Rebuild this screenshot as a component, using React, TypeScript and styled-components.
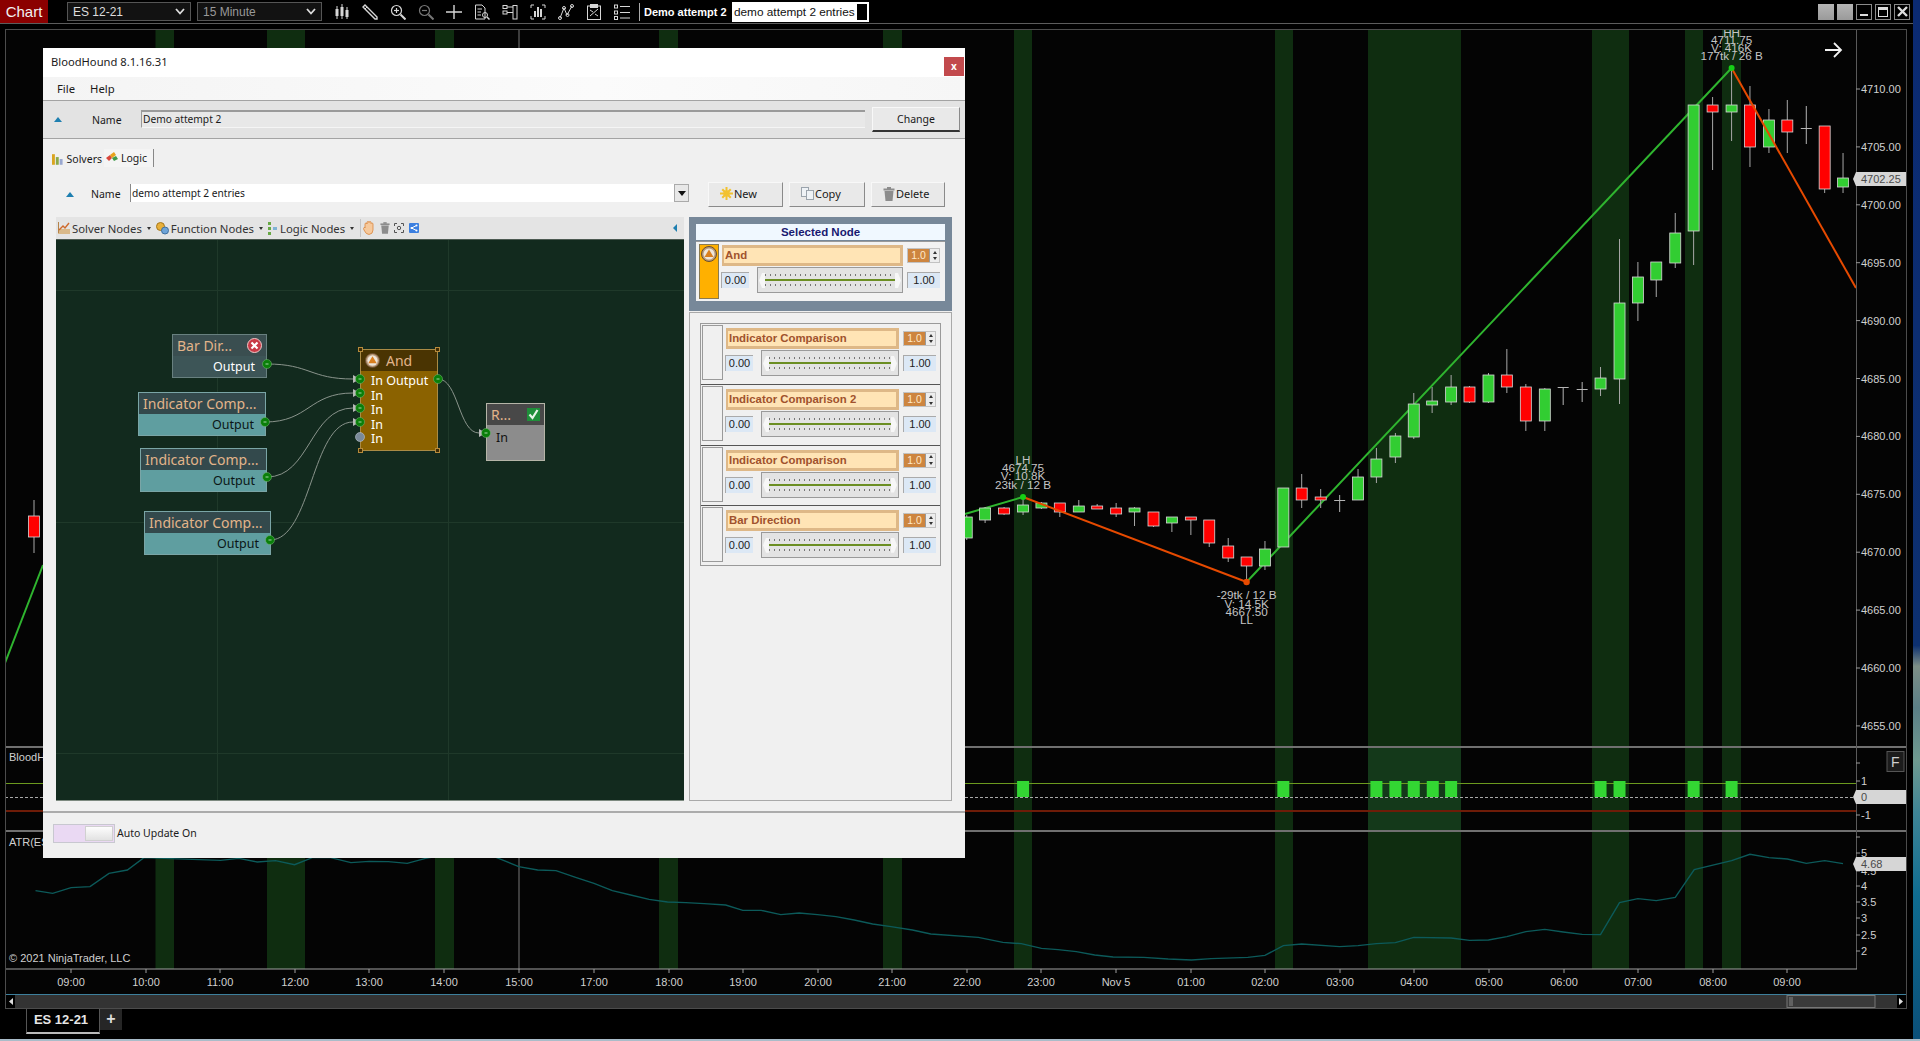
import React from "react"
import styled, { createGlobalStyle } from "styled-components"

const GlobalStyle = createGlobalStyle`
html, body {
    margin: 0;
    padding: 0;
    background: #000;
    overflow: hidden;
}
* {
    box-sizing: border-box;
}
`

const UI_FONT = `"Noto Sans", "Liberation Sans", sans-serif`
const CHART_FONT = `"Liberation Sans", Arial, sans-serif`

const Desktop = styled.div`
position: relative;
width: 1920px;
height: 1041px;
overflow: hidden;
background: linear-gradient(180deg, #0b2a72 0%, #0d3070 62%, #7d8f86 64%, #5b7f86 68%, #6f9a90 73%, #3f8596 78%, #0f6c90 86%, #0b4f78 100%);
`

const Platform = styled.div`
width: 1913px;
height: 1039px;
background: #000;
display: flex;
flex-direction: column;
font-family: ${CHART_FONT};
`

const BottomEdge = styled.div`
height: 2px;
background: #a9bcc9;
`

const TopBar = styled.div`
height: 24px;
flex: none;
display: flex;
align-items: center;
border-bottom: 1px solid #5c5c5c;
`

const ChartTag = styled.div`
width: 48px;
height: 23px;
background: #8b0000;
color: #f2f2f2;
font-size: 15px;
display: flex;
align-items: center;
justify-content: center;
`

const Select = styled.div<{ $dim?: boolean }>`
width: ${p => (p.$dim ? 125 : 124)}px;
height: 19px;
margin-left: ${p => (p.$dim ? 6 : 19)}px;
border: 1px solid #555;
background: #121212;
color: ${p => (p.$dim ? "#999" : "#ddd")};
font-size: 12px;
padding: 0 5px;
display: flex;
align-items: center;
justify-content: space-between;
`

const ToolIcons = styled.div`
display: flex;
gap: 12px;
margin-left: 12px;
color: #d6d6d6;
`

const ToolSep = styled.div`
width: 1px;
height: 18px;
background: #aaa;
margin-left: 9px;
`

const WorkspaceName = styled.div`
color: #fff;
font-weight: bold;
font-size: 11px;
margin-left: 4px;
width: 88px;
white-space: nowrap;
`

const WorkspaceInput = styled.div`
width: 137px;
height: 20px;
background: #fff;
color: #111;
font-size: 11.8px;
padding-left: 2px;
display: flex;
align-items: center;
justify-content: space-between;
white-space: nowrap;
&::after {
    content: "";
    width: 10px;
    height: 16px;
    background: #000;
    margin-right: 2px;
}
`

const WindowButtons = styled.div`
margin-left: auto;
display: flex;
gap: 3px;
padding-right: 3px;
`

const GreyButton = styled.div`
width: 16px;
height: 16px;
background: linear-gradient(180deg, #b5b5b5, #9a9a9a);
`

const WinButton = styled.div`
width: 16px;
height: 16px;
border: 1px solid #8a8a8a;
display: flex;
align-items: center;
justify-content: center;
color: #ddd;
`

const ChartFrame = styled.div`
margin: 5px 0 0 5px;
width: 1902px;
height: 980px;
flex: none;
`

const ChartSvg = styled.svg`
display: block;
font-family: ${CHART_FONT};
`

const AxisText = styled.text`
fill: #d0d0d0;
font-size: 11px;
`

const PivotText = styled.text`
fill: #c4c4c4;
font-size: 11.7px;
text-anchor: middle;
`

const TabStrip = styled.div`
flex: 1;
display: flex;
padding-left: 26px;
`

const ChartTab = styled.div`
width: 74px;
height: 25px;
border: 1px solid #555;
border-top: none;
border-bottom: 2px solid #bbb;
color: #e6e6e6;
font-weight: bold;
font-size: 13px;
padding: 0 4px 3px 0;
display: flex;
align-items: center;
justify-content: center;
`

const AddTab = styled.div`
width: 22px;
height: 21px;
background: #262626;
color: #ddd;
font-weight: bold;
font-size: 16px;
padding-bottom: 2px;
display: flex;
align-items: center;
justify-content: center;
`

/* the floating BloodHound window */
const Dialog = styled.div`
position: absolute;
left: 43px;
top: 48px;
width: 922px;
height: 810px;
background: #f0f0f0;
display: flex;
flex-direction: column;
font-family: ${UI_FONT};
color: #1a1a1a;
font-size: 11px;
`

const TitleBar = styled.div`
height: 29px;
flex: none;
background: #fff;
display: flex;
align-items: center;
justify-content: space-between;
padding: 0 1px 2px 8px;
font-size: 11.2px;
`

const CloseButton = styled.div`
width: 20px;
height: 19px;
margin-top: 9px;
background: #c24a4d;
color: #fff;
font-size: 10px;
font-weight: bold;
display: flex;
align-items: center;
justify-content: center;
`

const MenuBar = styled.div`
height: 23px;
flex: none;
background: linear-gradient(90deg, #f4f4f4, #fbfbfb 60%, #f6f6f6);
display: flex;
align-items: center;
gap: 15px;
padding-left: 14px;
font-size: 11.3px;
`

const NameBar = styled.div`
height: 39px;
flex: none;
background: #e3e3e3;
border-top: 1px solid #a3a3a3;
border-bottom: 1px solid #a3a3a3;
display: flex;
align-items: center;
padding-left: 11px;
font-size: 10.5px;
`

const UpTriangle = styled.div`
width: 0;
height: 0;
border-left: 4px solid transparent;
border-right: 4px solid transparent;
border-bottom: 5px solid #1e7fb0;
flex: none;
`

const BarLabel = styled.span`
margin-left: 30px;
width: 49px;
`

const NameField = styled.div`
width: 724px;
height: 18px;
margin-top: -1px;
background: #e8e8e8;
border-top: 2px solid #9a9a9a;
border-left: 1px solid #9a9a9a;
border-bottom: 1px solid #f5f5f5;
padding-left: 1px;
font-size: 10.2px;
line-height: 14px;
white-space: nowrap;
`

const RaisedButton = styled.div<{ $w: number }>`
width: ${p => p.$w}px;
height: 25px;
flex: none;
background: #e9e9e9;
border: 1px solid #f8f8f8;
border-right-color: #8a8a8a;
border-bottom-color: #8a8a8a;
display: flex;
align-items: center;
gap: 1px;
padding: 0 0 2px 11px;
font-size: 11px;
`

const ChangeButton = styled(RaisedButton)`
margin-left: 7px;
border-bottom: 2px solid #333;
justify-content: center;
padding: 0;
font-size: 10.5px;
`

const TabRow = styled.div`
height: 18px;
flex: none;
margin-top: 10px;
padding-left: 7px;
display: flex;
align-items: flex-end;
gap: 2px;
font-size: 10.5px;
`

const Tab = styled.div<{ $active?: boolean }>`
width: ${p => (p.$active ? 50 : 52)}px;
height: ${p => (p.$active ? 18 : 16)}px;
display: flex;
align-items: center;
gap: 3px;
padding-left: 2px;
background: ${p => (p.$active ? "#f4f4f4" : "#f0f0f0")};
border-right: ${p => (p.$active ? "1px solid #888" : "none")};
`

const Content = styled.div`
flex: 1;
padding: 15px 13px 10px;
display: flex;
flex-direction: column;
gap: 10px;
min-height: 0;
`

const LogicNameRow = styled.div`
height: 25px;
flex: none;
display: flex;
`

const RowTriangle = styled(UpTriangle)`
margin: 10px 17px 0 10px;
`

const RowLabel = styled.span`
width: 39px;
font-size: 10.5px;
line-height: 24px;
`

const Combo = styled.div`
width: 559px;
height: 18px;
margin: 2px 19px 0 0;
background: #fff;
border-left: 1px solid #888;
display: flex;
align-items: center;
justify-content: space-between;
padding-left: 1px;
font-size: 10.2px;
`

const ComboArrow = styled.div`
width: 15px;
height: 18px;
background: #e8e8e8;
border: 1px solid #aaa;
display: flex;
align-items: center;
justify-content: center;
&::after {
    content: "";
    border-left: 4px solid transparent;
    border-right: 4px solid transparent;
    border-top: 5px solid #111;
}
`

const ButtonGroup = styled.div`
display: flex;
gap: 6px;
`

const BodyGrid = styled.div`
flex: 1;
display: grid;
grid-template-columns: 628px 263px;
gap: 5px;
min-height: 0;
`

const GraphColumn = styled.div`
display: flex;
flex-direction: column;
`

const GraphToolbar = styled.div`
height: 22px;
flex: none;
background: #e4e4e4;
display: flex;
align-items: center;
padding: 0 7px 0 2px;
font-size: 11.3px;
color: #333;
`

const ToolItem = styled.span`
display: flex;
align-items: center;
gap: 2px;
white-space: nowrap;
`

const DropDot = styled.span`
margin: 0 5px 0 5px;
border-left: 2px solid transparent;
border-right: 2px solid transparent;
border-top: 3px solid #333;
`

const VertBar = styled.span`
width: 1px;
height: 18px;
background: #c4c4c4;
margin: 0 2px 0 1px;
`

const GroupGap = styled.span`
display: flex;
align-items: center;
gap: 4.5px;
`

const CollapseArrow = styled.span`
margin-left: auto;
border-top: 4px solid transparent;
border-bottom: 4px solid transparent;
border-right: 4px solid #1e7fb0;
`

const Canvas = styled.div`
position: relative;
flex: 1;
overflow: hidden;
border-top: 1px solid #4c5a52;
border-bottom: 1px solid #7d8a80;
background:
  linear-gradient(#1f392a, #1f392a) 161px 0 / 1px 100% no-repeat,
  linear-gradient(#1f392a, #1f392a) 392px 0 / 1px 100% no-repeat,
  linear-gradient(#1f392a, #1f392a) 0 50px / 100% 1px no-repeat,
  linear-gradient(#1f392a, #1f392a) 0 282px / 100% 1px no-repeat,
  linear-gradient(#1f392a, #1f392a) 0 513px / 100% 1px no-repeat,
  #122a1e;
`

const Wires = styled.svg`
position: absolute;
left: 0;
top: 0;
pointer-events: none;
`

type NodeKind = "bar" | "indicator" | "logic" | "result"

const NODE_COLORS: Record<NodeKind, { head: string; body: string; border: string; text: string }> = {
    bar: { head: "#3a4e50", body: "#3d5557", border: "#68807f", text: "#fff" },
    indicator: { head: "#33494c", body: "#5f9ea0", border: "#7aa5a6", text: "#0b1616" },
    logic: { head: "#4a3402", body: "#8b6200", border: "#a98a45", text: "#fff" },
    result: { head: "#484848", body: "#8c8c8c", border: "#b5b5a8", text: "#111" },
}

const GraphNode = styled.div<{ $x: number; $y: number; $w: number; $h: number; $kind: NodeKind }>`
position: absolute;
left: ${p => p.$x - 56}px;
top: ${p => p.$y - 240}px;
width: ${p => p.$w}px;
height: ${p => p.$h}px;
background: ${p => NODE_COLORS[p.$kind].body};
border: 1px solid ${p => NODE_COLORS[p.$kind].border};
color: ${p => NODE_COLORS[p.$kind].text};
display: flex;
flex-direction: column;
`

const NodeHead = styled.div<{ $kind: NodeKind }>`
height: 21px;
flex: none;
background: ${p => NODE_COLORS[p.$kind].head};
color: #e2b48a;
font-size: 14px;
line-height: 21px;
padding-left: 4px;
display: flex;
align-items: center;
justify-content: space-between;
padding-right: 4px;
white-space: nowrap;
`

const LogicHead = styled(NodeHead)`
justify-content: flex-start;
gap: 6px;
`

const NodeOutput = styled.div`
text-align: right;
font-size: 12.5px;
line-height: 22px;
padding-right: 11px;
`

const LogicBody = styled.div`
padding: 3px 0 0 10px;
font-size: 12.5px;
line-height: 14.5px;
`

const ResultBody = styled.div`
padding: 4px 0 0 9px;
font-size: 12.5px;
`

const Handle = styled.span<{ $r?: boolean; $b?: boolean }>`
position: absolute;
width: 5px;
height: 5px;
border: 1px solid #b58a3c;
background: #3c2b05;
${p => (p.$r ? "right: -3px;" : "left: -3px;")}
${p => (p.$b ? "bottom: -3px;" : "top: -3px;")}
`

const SidePanel = styled.div`
display: flex;
flex-direction: column;
gap: 1px;
min-height: 0;
`

const SelectedBox = styled.div`
height: 94px;
flex: none;
background: #778899;
padding: 7px 7px 0;
`

const SelectedHead = styled.div`
height: 16px;
background: #f0f8ff;
color: #191970;
font-family: ${CHART_FONT};
font-weight: bold;
font-size: 11.5px;
line-height: 16px;
text-align: center;
`

const SelectedBody = styled.div`
height: 60px;
margin-top: 1px;
background: #f2f2f2;
border-top: 1px solid #999;
padding: 2px 0 0 3px;
`

const ListPanel = styled.div`
flex: 1;
background: #f0f0f0;
border: 1px solid #a9a9a9;
padding: 10px;
`

const NodeList = styled.div`
height: 243px;
border: 1px solid #9a9a9a;
display: grid;
grid-auto-rows: 1fr;
`

const NodeCard = styled.div<{ $selected?: boolean }>`
display: flex;
padding: ${p => (p.$selected ? "0" : "1px 0 0 1px")};
& + & {
    border-top: 1px solid #555;
}
`

const Swatch = styled.div<{ $selected?: boolean }>`
width: ${p => (p.$selected ? 20 : 21)}px;
height: 55px;
flex: none;
background: ${p => (p.$selected ? "#ffb000" : "#f0f0f0")};
border: 1px solid ${p => (p.$selected ? "#8a7a50" : "#9a9a9a")};
display: flex;
justify-content: center;
padding-top: 1px;
`

const Controls = styled.div<{ $selected?: boolean }>`
margin: ${p => (p.$selected ? "1px 0 0 2px" : "3px 0 0 2px")};
display: grid;
grid-template-columns: 28px ${p => (p.$selected ? 150 : 142)}px 33px;
grid-template-rows: 21px 26px;
column-gap: 4px;
row-gap: 1px;
align-items: center;
`

const NodeTitle = styled.div`
grid-column: 1 / 3;
height: 21px;
margin-left: 1px;
background: #ffe4b5;
border: 3px solid #deb887;
border-left-width: 2px;
color: #a0522d;
font-family: ${CHART_FONT};
font-weight: bold;
font-size: 11.4px;
line-height: 15px;
padding-left: 1px;
white-space: nowrap;
`

const Spinner = styled.div`
height: 15px;
display: flex;
border: 1px solid #c2c2c2;
`

const SpinValue = styled.div`
width: 21px;
background: #cd853f;
color: #ffe8c8;
font-family: ${CHART_FONT};
font-size: 10.5px;
line-height: 13px;
text-align: center;
`

const SpinArrows = styled.div`
flex: 1;
background: #ededed;
display: flex;
flex-direction: column;
align-items: center;
justify-content: space-around;
border-left: 1px solid #999;
`

const SpinUp = styled.span`
border-left: 2px solid transparent;
border-right: 2px solid transparent;
border-bottom: 3px solid #333;
`

const SpinDown = styled.span`
border-left: 2px solid transparent;
border-right: 2px solid transparent;
border-top: 3px solid #333;
`

const ValueBox = styled.div`
height: 16px;
background: #dce8f5;
border-top: 1px solid #aaa;
border-left: 1px solid #aaa;
font-family: ${CHART_FONT};
font-size: 11px;
line-height: 15px;
text-align: center;
color: #222;
`

const Slider = styled.div`
position: relative;
height: 26px;
margin-left: 4px;
width: calc(100% - 4px);
background: #e3e3e3;
border: 1px solid #9a9a9a;
&::before,
&::after {
    content: "";
    position: absolute;
    left: 7px;
    right: 7px;
    height: 2px;
    background: repeating-linear-gradient(90deg, #777 0 1px, transparent 1px 5px);
}
&::before {
    top: 6px;
}
&::after {
    top: 16px;
}
`

const SliderFill = styled.div`
position: absolute;
left: 6px;
right: 5px;
top: 11px;
height: 2px;
background: #6b8e23;
`

const SliderStop = styled.span`
position: absolute;
left: 6px;
top: 7px;
width: 1px;
height: 11px;
background: #666;
`

const ThumbLeft = styled.span`
position: absolute;
left: 1px;
top: 5px;
width: 6px;
height: 15px;
background: #f7f7f7;
clip-path: polygon(100% 0, 100% 100%, 50% 100%, 0 50%, 50% 0);
`

const ThumbRight = styled.span`
position: absolute;
right: 1px;
top: 5px;
width: 6px;
height: 15px;
background: #f7f7f7;
clip-path: polygon(0 0, 50% 0, 100% 50%, 50% 100%, 0 100%);
`

const Footer = styled.div`
height: 47px;
flex: none;
border-top: 2px solid #ababab;
padding: 11px 0 0 10px;
display: flex;
align-items: flex-start;
gap: 2px;
font-size: 10.5px;
`

const Toggle = styled.div`
width: 62px;
height: 19px;
background: #ead9f3;
border: 1px solid #c8c8d0;
display: flex;
justify-content: flex-end;
padding: 1px;
`

const ToggleKnob = styled.div`
width: 28px;
background: linear-gradient(180deg, #fdfdfd, #e2e2e2);
border: 1px solid #d0d0d0;
`

const ToggleLabel = styled.span`
line-height: 19px;
`

/* ---------- drawn icons ---------- */

function IconCandles() {
    return (
        <svg width="16" height="16" viewBox="0 0 16 16" stroke="currentColor" fill="currentColor">
            <path d="M3 2v13M8 0v15M13 3v12" strokeWidth="1" />
            <rect x="1.5" y="5" width="3" height="7" stroke="none" />
            <rect x="6.5" y="3" width="3" height="9" stroke="none" />
            <rect x="11.5" y="6" width="3" height="7" stroke="none" />
        </svg>
    )
}

function IconPencil() {
    return (
        <svg width="16" height="16" viewBox="0 0 16 16" fill="none" stroke="currentColor">
            <path d="M1 3L3 1L15 13L15 15L13 15Z" strokeWidth="1.4" />
            <path d="M3 5L5 3" />
        </svg>
    )
}

function IconZoom({ plus, dim }: { plus?: boolean; dim?: boolean }) {
    return (
        <svg width="16" height="16" viewBox="0 0 16 16" fill="none" stroke={dim ? "#777" : "currentColor"} strokeWidth="1.2">
            <circle cx="6.5" cy="6.5" r="5" />
            <path d="M10.5 10.5L15.5 15.5" strokeWidth="2" />
            <path d="M4 6.5H9" />
            {plus && <path d="M6.5 4V9" />}
        </svg>
    )
}

function IconCross() {
    return (
        <svg width="16" height="16" viewBox="0 0 16 16" stroke="currentColor" strokeWidth="1.4">
            <path d="M0 8H16M8 1V15" />
        </svg>
    )
}

function IconDocSearch() {
    return (
        <svg width="16" height="16" viewBox="0 0 16 16" fill="none" stroke="currentColor">
            <path d="M1.5 1H8L11 4V15H1.5Z" />
            <path d="M3.5 5H8M3.5 8H7M3.5 11H7" />
            <circle cx="11" cy="11" r="2.5" />
            <path d="M13 13L15.5 15.5" strokeWidth="1.5" />
        </svg>
    )
}

function IconPanels() {
    return (
        <svg width="16" height="16" viewBox="0 0 16 16" fill="none" stroke="currentColor">
            <rect x="11" y="1.5" width="4" height="13.5" />
            <rect x="1" y="1.5" width="4" height="3" />
            <rect x="1" y="7" width="4" height="3" />
            <path d="M5 3H11M5 8.5H11" />
        </svg>
    )
}

function IconBarsFrame() {
    return (
        <svg width="16" height="16" viewBox="0 0 16 16" fill="none" stroke="currentColor">
            <path d="M1 4V1H4M12 1H15V4M15 12V15H12M4 15H1V12" />
            <path d="M5 13V7M8 13V3M11 13V5" strokeWidth="2" />
        </svg>
    )
}

function IconLineNodes() {
    return (
        <svg width="16" height="16" viewBox="0 0 16 16" fill="none" stroke="currentColor">
            <path d="M2 14L6 4L9 11L14 2" />
            <circle cx="2" cy="14" r="1.5" />
            <circle cx="6" cy="4" r="1.5" />
            <circle cx="9.5" cy="11" r="1.5" />
            <circle cx="14" cy="2" r="1.5" />
        </svg>
    )
}

function IconClipboard() {
    return (
        <svg width="16" height="16" viewBox="0 0 16 16" fill="none" stroke="currentColor">
            <rect x="1.5" y="2" width="13" height="13.5" />
            <rect x="4.5" y="0.5" width="7" height="3" fill="currentColor" />
            <path d="M4 12L12 5M4 6L7 8M9 10L12 12" />
        </svg>
    )
}

function IconList() {
    return (
        <svg width="16" height="16" viewBox="0 0 16 16" fill="none" stroke="currentColor">
            <rect x="0.5" y="1" width="3" height="3" />
            <rect x="0.5" y="7" width="3" height="3" />
            <rect x="0.5" y="12.5" width="3" height="3" />
            <path d="M6 2.5H16M6 8.5H16M6 14H16" />
        </svg>
    )
}

function IconSolvers() {
    return (
        <svg width="12" height="12" viewBox="0 0 12 12">
            <rect x="0" y="1" width="3" height="11" fill="#d9a520" />
            <rect x="4" y="4" width="3" height="8" fill="#8aa94a" />
            <rect x="8" y="6" width="3" height="6" fill="#9aa8d0" />
        </svg>
    )
}

function IconLogic() {
    return (
        <svg width="12" height="12" viewBox="0 0 12 12">
            <path d="M0 6L4 3L6 6L3 9Z" fill="#d9453a" />
            <path d="M4 3L8 0L10 3L6 6Z" fill="#e8a21c" />
            <path d="M6 6L10 4L12 7L8 9Z" fill="#3f9a4a" />
        </svg>
    )
}

function IconNew() {
    return (
        <svg width="13" height="13" viewBox="0 0 13 13" fill="#f2c230">
            <circle cx="6.5" cy="6.5" r="3.2" />
            <path d="M5.5 0H7.5V13H5.5ZM0 5.5H13V7.5H0Z" />
            <path d="M1.5 3L3 1.5L11.5 10L10 11.5ZM10 1.5L11.5 3L3 11.5L1.5 10Z" />
        </svg>
    )
}

function IconCopy() {
    return (
        <svg width="13" height="13" viewBox="0 0 13 13" fill="#eef2f6" stroke="#9aa3ac">
            <rect x="0.5" y="0.5" width="7" height="9" />
            <rect x="5.5" y="3.5" width="7" height="9" />
        </svg>
    )
}

function IconTrash({ size = 12 }: { size?: number }) {
    return (
        <svg width={size} height={size + 2} viewBox="0 0 12 14" fill="#8c8c8c">
            <rect x="0.5" y="1.5" width="11" height="2" />
            <rect x="4" y="0" width="4" height="2" />
            <path d="M1.5 4H10.5L9.5 14H2.5Z" />
        </svg>
    )
}

function IconChart() {
    return (
        <svg width="12" height="12" viewBox="0 0 12 12">
            <rect x="0" y="7" width="12" height="5" fill="#d9b98a" />
            <path d="M0.5 0V11" stroke="#b5834a" />
            <path d="M1 8L5 4L7 6L11 1" stroke="#cf6a2c" strokeWidth="1.4" fill="none" />
        </svg>
    )
}

function IconFunction() {
    return (
        <svg width="13" height="13" viewBox="0 0 13 13">
            <circle cx="4.5" cy="4.5" r="4" fill="#e8b03a" stroke="#a4761c" />
            <circle cx="9" cy="8.5" r="3.5" fill="#6ea4d8" stroke="#3f6f9f" />
        </svg>
    )
}

function IconLogicNodes() {
    return (
        <svg width="10" height="13" viewBox="0 0 10 13">
            <rect x="0" y="0" width="3" height="3" fill="#67a845" />
            <rect x="0" y="5" width="3" height="3" fill="#67a845" />
            <rect x="0" y="10" width="3" height="3" fill="#67a845" />
            <rect x="5" y="5" width="4" height="3" fill="#7fb3d6" />
        </svg>
    )
}

function IconHand() {
    return (
        <svg width="12" height="14" viewBox="0 0 12 14" fill="#f6c99c" stroke="#d9863f" strokeWidth="0.8">
            <path d="M2 7V3Q2 2 3 2T4 3V1.5Q4 .5 5 .5T6 1.5V1.5Q6 .5 7 .5T8 1.5V2.5Q8 2 9 2T10 3V9Q10 13 6 13.5Q3 13.5 1 9Q0 7 1 6.5T2 7Z" />
        </svg>
    )
}

function IconFocus() {
    return (
        <svg width="10" height="10" viewBox="0 0 10 10" fill="none" stroke="#555">
            <path d="M0.5 3V0.5H3M7 0.5H9.5V3M9.5 7V9.5H7M3 9.5H0.5V7" />
            <circle cx="5" cy="5" r="1.7" />
        </svg>
    )
}

function IconShare() {
    return (
        <svg width="10" height="10" viewBox="0 0 10 10">
            <rect width="10" height="10" rx="1" fill="#3b7fe0" />
            <path d="M7.5 2.5L2.5 5L7.5 7.5" stroke="#fff" fill="none" />
            <circle cx="7.5" cy="2.5" r="1" fill="#fff" />
            <circle cx="2.5" cy="5" r="1" fill="#fff" />
            <circle cx="7.5" cy="7.5" r="1" fill="#fff" />
        </svg>
    )
}

function ChevronIcon() {
    return (
        <svg width="10" height="7" viewBox="0 0 10 7" fill="none" stroke="#ddd" strokeWidth="1.8">
            <path d="M1 1L5 5.5L9 1" />
        </svg>
    )
}

function NodeBadge({ size }: { size: number }) {
    return (
        <svg width={size} height={size} viewBox="0 0 16 16" style={{ flex: "none" }}>
            <circle cx="8" cy="8" r="7.5" fill="#b89a7a" stroke="#6b4d2c" />
            <circle cx="8" cy="8" r="5.5" fill="#efe6da" />
            <path d="M8 3.5L12.5 11H3.5Z" fill="#d97f1f" />
        </svg>
    )
}

function StopBadge() {
    return (
        <svg width="15" height="15" viewBox="0 0 15 15">
            <circle cx="7.5" cy="7.5" r="7" fill="#c93a46" stroke="#f0c8c8" />
            <path d="M4.5 4.5L10.5 10.5M10.5 4.5L4.5 10.5" stroke="#fff" strokeWidth="2.2" />
        </svg>
    )
}

function CheckBadge() {
    return (
        <svg width="13" height="13" viewBox="0 0 13 13">
            <rect width="13" height="13" fill="#1f8f3a" />
            <path d="M2.5 6.5L5.5 10L10.5 2" stroke="#e8f4e8" strokeWidth="2.2" fill="none" />
        </svg>
    )
}

/* ---------- chart data (screen coordinates) ---------- */

const zx = (v: number) => 960 + v / 1.633

// centre x in the right half, high, body top, body bottom, low, colour
const CANDLES: Array<[number, number, number, number, number, string]> = [
    [1442, 153, 178, 187, 193, "g"], [1412, 126, 126, 189, 193, "r"], [1382, 106, 128, 129, 144, "d"],
    [1351, 100, 120, 132, 153, "r"], [1321, 109, 120, 147, 153, "g"], [1290, 86, 105, 147, 167, "r"],
    [1260, 68, 105, 112, 141, "g"], [1229, 97, 105, 112, 170, "r"], [1198, 105, 105, 231, 265, "g"],
    [1168, 213, 233, 263, 268, "g"], [1137, 262, 262, 280, 297, "g"], [1107, 262, 277, 303, 321, "g"],
    [1077, 239, 303, 379, 404, "g"], [1046, 367, 378, 389, 396, "g"], [1016, 382, 389, 390, 402, "d"],
    [985, 387, 387, 388, 405, "d"], [955, 388, 389, 421, 431, "g"], [924, 384, 387, 421, 431, "r"],
    [893, 349, 375, 387, 393, "r"], [863, 373, 375, 402, 403, "g"], [832, 386, 387, 402, 403, "r"],
    [802, 375, 387, 402, 405, "g"], [771, 387, 401, 405, 413, "g"], [741, 393, 404, 437, 439, "g"],
    [711, 433, 436, 457, 463, "g"], [680, 448, 459, 477, 483, "g"], [650, 469, 477, 500, 500, "g"],
    [620, 495, 500, 500, 512, "d"], [589, 489, 497, 500, 508, "r"], [558, 474, 488, 500, 508, "r"],
    [528, 488, 488, 547, 547, "g"], [498, 541, 549, 566, 570, "g"], [468, 557, 557, 566, 582, "r"],
    [438, 538, 546, 558, 562, "r"], [407, 520, 520, 543, 547, "r"], [377, 517, 517, 520, 535, "r"],
    [346, 517, 517, 523, 532, "g"], [316, 512, 512, 526, 527, "r"], [285, 507, 508, 512, 526, "g"],
    [255, 503, 508, 514, 517, "r"], [224, 504, 506, 509, 509, "r"], [194, 500, 506, 512, 512, "g"],
    [163, 503, 503, 512, 517, "r"], [133, 502, 503, 508, 509, "g"], [103, 497, 505, 512, 515, "g"],
    [72, 507, 508, 514, 515, "r"], [41, 507, 508, 520, 523, "g"], [11, 515, 517, 538, 540, "g"],
]

const SHADES: Array<[number, number]> = [
    [155.5, 174], [267, 305], [435, 454], [659, 678], [883, 902],
    [1014, 1032], [1275, 1293], [1368, 1461], [1592, 1629], [1685, 1703], [1722, 1741],
]

const SIGNAL_BARS = [103, 528, 680, 711, 741, 772, 802, 1046, 1077, 1198, 1260]

const PRICE_LABELS = ["4710.00", "4705.00", "4700.00", "4695.00", "4690.00", "4685.00", "4680.00", "4675.00", "4670.00", "4665.00", "4660.00", "4655.00"]

const TIME_LABELS: Array<[string, number]> = [
    ["09:00", 71], ["10:00", 146], ["11:00", 220], ["12:00", 295], ["13:00", 369], ["14:00", 444], ["15:00", 519],
    ["17:00", 594], ["18:00", 669], ["19:00", 743], ["20:00", 818], ["21:00", 892], ["22:00", 967], ["23:00", 1041],
    ["Nov 5", 1116], ["01:00", 1191], ["02:00", 1265], ["03:00", 1340], ["04:00", 1414], ["05:00", 1489],
    ["06:00", 1564], ["07:00", 1638], ["08:00", 1713], ["09:00", 1787],
]

const ATR_AXIS: Array<[string, number]> = [["5", 853], ["4.5", 871], ["4", 886], ["3.5", 902], ["3", 918], ["2.5", 935], ["2", 951]]

const ATR_LEFT = [
    [58, 452], [86, 460], [116, 443], [147, 440], [178, 400], [208, 390], [235, 353], [268, 355], [360, 361], [390, 355],
    [420, 366], [450, 362], [481, 374], [510, 353], [540, 353], [573, 368], [603, 364], [634, 365], [665, 370], [695, 355],
    [725, 345], [810, 352], [847, 380], [878, 390], [908, 392], [940, 412], [970, 430], [1000, 452], [1030, 465], [1060, 478],
    [1090, 486], [1120, 488], [1150, 491], [1185, 495], [1213, 511], [1243, 511], [1275, 524], [1305, 519], [1335, 524],
    [1365, 530], [1395, 540], [1425, 552], [1455, 560], [1490, 570], [1520, 582],
]

const ATR_RIGHT = [
    [30, 592], [70, 607], [100, 611], [133, 625], [160, 629], [190, 635], [220, 645], [250, 651], [300, 652], [340, 657],
    [378, 660], [410, 656], [470, 652], [498, 646], [528, 617], [558, 612], [620, 620], [650, 617], [680, 611], [711, 608],
    [741, 592], [802, 594], [832, 601], [863, 600], [893, 590], [924, 575], [955, 568], [985, 576], [1016, 583], [1046, 584],
    [1077, 488], [1107, 476], [1137, 482], [1168, 472], [1199, 389], [1260, 362], [1290, 343], [1321, 353], [1351, 357],
    [1382, 370], [1412, 362], [1442, 371],
]

const atrPoints = [
    ...ATR_LEFT.map(([x, y]) => `${x / 1.633},${740 + y / 3}`),
    ...ATR_RIGHT.map(([x, y]) => `${zx(x)},${740 + y / 3}`),
].join(" ")

function Candle({ x, high, top, bottom, low, kind }: { x: number; high: number; top: number; bottom: number; low: number; kind: string }) {
    if (kind === "d") {
        return (
            <g stroke="#b5b5b5">
                <line x1={x} x2={x} y1={high} y2={low} />
                <line x1={x - 5.5} x2={x + 5.5} y1={top + 0.5} y2={top + 0.5} />
            </g>
        )
    }
    return (
        <g>
            <line x1={x} x2={x} y1={high} y2={low} stroke="#a8a8a8" />
            <rect x={x - 5.5} y={top} width={11} height={bottom - top} fill={kind === "g" ? "#32cd32" : "#ff0000"} stroke="#d8d8d8" strokeWidth="0.8" />
        </g>
    )
}

const FlagText = styled(AxisText)`
fill: #4a4a4a;
`

function PriceFlag({ y, label }: { y: number; label: string }) {
    return (
        <g>
            <path d={`M1853 ${y}L1856 ${y - 7}H1906V${y + 7}H1856Z`} fill="#d6d6d6" />
            <FlagText x={1861} y={y + 4}>{label}</FlagText>
        </g>
    )
}

const FButtonText = styled(AxisText)`
font-size: 14px;
`

function Chart() {
    return (
        <ChartSvg width="1902" height="980" viewBox="5 29 1902 980">
            <rect x="5" y="29" width="1902" height="980" fill="#040404" />
            {SHADES.map(([a, b]) => (
                <rect key={a} x={a} y={29} width={b - a} height={940} fill="#0f2d10" />
            ))}
            <rect x="1368" y="747" width="93" height="84" fill="#14391a" />
            <line x1="519" x2="519" y1="29" y2="969" stroke="#777" />

            {/* price panel */}
            <polyline points="5,663 43,565" fill="none" stroke="#2fb52f" strokeWidth="2" />
            <line x1="965" y1="514" x2="1023" y2="497" stroke="#2fb52f" strokeWidth="2" />
            <line x1="1246.6" y1="582" x2="1731.6" y2="68" stroke="#2fb52f" strokeWidth="2" />
            {CANDLES.map(c => (
                <Candle key={c[0]} x={zx(c[0])} high={c[1]} top={c[2]} bottom={c[3]} low={c[4]} kind={c[5]} />
            ))}
            <Candle x={34} high={500} top={516} bottom={537} low={553} kind="r" />
            <line x1="1023" y1="497" x2="1246.6" y2="582" stroke="#e64a00" strokeWidth="2" />
            <line x1="1731.6" y1="68" x2="1856" y2="288" stroke="#e64a00" strokeWidth="2" />
            <circle cx="1731.6" cy="68" r="3" fill="#16d016" />
            <circle cx="1023" cy="497" r="3" fill="#16d016" />
            <circle cx="1246.6" cy="582" r="3.2" fill="#e64a00" />

            <PivotText x="1731.6" y="37">HH</PivotText>
            <PivotText x="1731.6" y="44">4711.75</PivotText>
            <PivotText x="1731.6" y="52">V: 416K</PivotText>
            <PivotText x="1731.6" y="60">177tk / 26 B</PivotText>
            <PivotText x="1023" y="464">LH</PivotText>
            <PivotText x="1023" y="472">4674.75</PivotText>
            <PivotText x="1023" y="480">V: 10.8K</PivotText>
            <PivotText x="1023" y="489">23tk / 12 B</PivotText>
            <PivotText x="1246.6" y="599">-29tk / 12 B</PivotText>
            <PivotText x="1246.6" y="608">V: 14.5K</PivotText>
            <PivotText x="1246.6" y="616">4667.50</PivotText>
            <PivotText x="1246.6" y="624">LL</PivotText>

            <path d="M1825 50H1841M1834 43L1841 50L1834 57" fill="none" stroke="#f2f2f2" strokeWidth="1.8" />

            {/* indicator panel */}
            <line x1="5" x2="1856" y1="783.5" y2="783.5" stroke="#6b9a1e" />
            <line x1="5" x2="1856" y1="797.5" y2="797.5" stroke="#a8a8a8" strokeDasharray="3 2" />
            <line x1="5" x2="1856" y1="811" y2="811" stroke="#6e1c08" strokeWidth="2" />
            {SIGNAL_BARS.map(b => (
                <rect key={b} x={zx(b) - 6} y={781} width={12} height={16} fill="#33d633" />
            ))}
            <line x1="5" x2="1907" y1="747" y2="747" stroke="#707070" strokeWidth="2" />
            <line x1="5" x2="1907" y1="831" y2="831" stroke="#707070" strokeWidth="2" />
            <AxisText x="9" y="761">BloodHound</AxisText>
            <AxisText x="9" y="846">ATR(ES 12-21)</AxisText>
            <AxisText x="9" y="962">© 2021 NinjaTrader, LLC</AxisText>

            {/* ATR panel */}
            <polyline points={atrPoints} fill="none" stroke="#0c5a5a" strokeWidth="1.4" />

            {/* price axis */}
            <line x1="1856.5" x2="1856.5" y1="29" y2="969" stroke="#5a5a5a" />
            {PRICE_LABELS.map((p, i) => (
                <g key={p}>
                    <line x1="1856" x2="1860" y1={89 + i * 57.9} y2={89 + i * 57.9} stroke="#999" />
                    <AxisText x="1861" y={93 + i * 57.9}>{p}</AxisText>
                </g>
            ))}
            <line x1="1856" x2="1860" y1="763" y2="763" stroke="#999" />
            <line x1="1856" x2="1860" y1="781" y2="781" stroke="#999" />
            <AxisText x="1861" y="785">1</AxisText>
            <line x1="1856" x2="1860" y1="815" y2="815" stroke="#999" />
            <AxisText x="1861" y="819">-1</AxisText>
            <line x1="1856" x2="1860" y1="837" y2="837" stroke="#999" />
            {ATR_AXIS.map(([t, y]) => (
                <g key={t}>
                    <line x1="1856" x2="1860" y1={y} y2={y} stroke="#999" />
                    <AxisText x="1861" y={y + 4}>{t}</AxisText>
                </g>
            ))}
            <PriceFlag y={179} label="4702.25" />
            <PriceFlag y={797} label="0" />
            <PriceFlag y={864} label="4.68" />

            <rect x="1887" y="751.5" width="17" height="20" fill="#1c1c1c" stroke="#555" />
            <FButtonText x="1891" y="767">F</FButtonText>

            {/* time axis */}
            <line x1="5" x2="1857" y1="969" y2="969" stroke="#a0a0a0" />
            {TIME_LABELS.map(([t, x]) => (
                <g key={x}>
                    <line x1={x} x2={x} y1="969" y2="973" stroke="#a0a0a0" />
                    <AxisText x={x} y="986" textAnchor="middle">{t}</AxisText>
                </g>
            ))}

            {/* scrollbar */}
            <rect x="5" y="994" width="1902" height="14" fill="#333" />
            <line x1="5" x2="1907" y1="994.5" y2="994.5" stroke="#3d7f9c" />
            <rect x="6" y="995" width="9" height="13" fill="#000" />
            <path d="M13 998L9 1001.5L13 1005Z" fill="#ddd" />
            <rect x="1787" y="995.5" width="88" height="12" fill="#3a3a3a" stroke="#777" />
            <path d="M1790 997V1006M1792 997V1006" stroke="#888" />
            <rect x="1897" y="995" width="9" height="13" fill="#000" />
            <path d="M1899 998L1903 1001.5L1899 1005Z" fill="#ddd" />
            <rect x="5.5" y="29.5" width="1901" height="979" fill="none" stroke="#4c4c4c" />
        </ChartSvg>
    )
}

/* ---------- node editor ---------- */

function wire(x1: number, y1: number, x2: number, y2: number) {
    const mid = (x1 + x2) / 2
    return `M${x1} ${y1}C${mid} ${y1} ${mid} ${y2} ${x2} ${y2}`
}

const WIRE_LIST: Array<[number, number, number, number]> = [
    [267, 364, 353, 379],
    [265, 422, 353, 393],
    [267, 477, 353, 408],
    [270, 540, 353, 422],
    [438, 379, 479, 433],
]

const IN_PORTS: Array<[number, number]> = [[360, 379], [360, 393], [360, 408], [360, 422], [486, 433]]
const OUT_PORTS: Array<[number, number]> = [[267, 364], [265, 422], [267, 477], [270, 540], [438, 379]]

function Port({ x, y }: { x: number; y: number }) {
    return (
        <g>
            <circle cx={x} cy={y} r={4.5} fill="#0a7f0a" stroke="#7fb87f" strokeWidth="0.5" />
            <line x1={x - 1.5} x2={x + 1.5} y1={y} y2={y} stroke="#a8d8a8" />
        </g>
    )
}

function WireLayer() {
    return (
        <Wires width="628" height="560" viewBox="56 240 628 560">
            {WIRE_LIST.map(w => (
                <g key={w[1]}>
                    <path d={wire(w[0], w[1], w[2], w[3])} fill="none" stroke="#8a948c" strokeWidth="1" />
                    <path d={`M${w[2]} ${w[3] - 4}L${w[2] + 7} ${w[3]}L${w[2]} ${w[3] + 4}Z`} fill="#b8b8b8" />
                </g>
            ))}
            {IN_PORTS.map(([x, y]) => <Port key={y} x={x} y={y} />)}
            {OUT_PORTS.map(([x, y]) => <Port key={y} x={x} y={y} />)}
            <circle cx="360" cy="437" r="4.5" fill="#7a8a9a" stroke="#c0c8d0" strokeWidth="0.6" />
        </Wires>
    )
}

function NodeEditor() {
    return (
        <Canvas>
            <GraphNode $x={172} $y={334} $w={95} $h={44} $kind="bar">
                <NodeHead $kind="bar">Bar Dir...<StopBadge /></NodeHead>
                <NodeOutput>Output</NodeOutput>
            </GraphNode>
            <GraphNode $x={138} $y={392} $w={128} $h={44} $kind="indicator">
                <NodeHead $kind="indicator">Indicator Comp...</NodeHead>
                <NodeOutput>Output</NodeOutput>
            </GraphNode>
            <GraphNode $x={140} $y={448} $w={127} $h={44} $kind="indicator">
                <NodeHead $kind="indicator">Indicator Comp...</NodeHead>
                <NodeOutput>Output</NodeOutput>
            </GraphNode>
            <GraphNode $x={144} $y={511} $w={127} $h={44} $kind="indicator">
                <NodeHead $kind="indicator">Indicator Comp...</NodeHead>
                <NodeOutput>Output</NodeOutput>
            </GraphNode>
            <GraphNode $x={360} $y={349} $w={78} $h={102} $kind="logic">
                <LogicHead $kind="logic"><NodeBadge size={15} />And</LogicHead>
                <LogicBody>
                    <div>In Output</div>
                    <div>In</div>
                    <div>In</div>
                    <div>In</div>
                    <div>In</div>
                </LogicBody>
                <Handle />
                <Handle $r />
                <Handle $b />
                <Handle $r $b />
            </GraphNode>
            <GraphNode $x={486} $y={403} $w={59} $h={58} $kind="result">
                <NodeHead $kind="result">R...<CheckBadge /></NodeHead>
                <ResultBody>In</ResultBody>
            </GraphNode>
            <WireLayer />
        </Canvas>
    )
}

function NodeControls({ title, selected }: { title: string; selected?: boolean }) {
    return (
        <Controls $selected={selected}>
            <NodeTitle>{title}</NodeTitle>
            <Spinner>
                <SpinValue>1.0</SpinValue>
                <SpinArrows>
                    <SpinUp />
                    <SpinDown />
                </SpinArrows>
            </Spinner>
            <ValueBox>0.00</ValueBox>
            <Slider>
                <SliderFill />
                <SliderStop />
                <ThumbLeft />
                <ThumbRight />
            </Slider>
            <ValueBox>1.00</ValueBox>
        </Controls>
    )
}

const LIST_NODES = ["Indicator Comparison", "Indicator Comparison 2", "Indicator Comparison", "Bar Direction"]

function BloodHoundWindow() {
    return (
        <Dialog>
            <TitleBar>
                BloodHound 8.1.16.31
                <CloseButton>x</CloseButton>
            </TitleBar>
            <MenuBar>
                <span>File</span>
                <span>Help</span>
            </MenuBar>
            <NameBar>
                <UpTriangle />
                <BarLabel>Name</BarLabel>
                <NameField>Demo attempt 2</NameField>
                <ChangeButton $w={88}>Change</ChangeButton>
            </NameBar>
            <TabRow>
                <Tab><IconSolvers />Solvers</Tab>
                <Tab $active><IconLogic />Logic</Tab>
            </TabRow>
            <Content>
                <LogicNameRow>
                    <RowTriangle />
                    <RowLabel>Name</RowLabel>
                    <Combo>
                        demo attempt 2 entries
                        <ComboArrow />
                    </Combo>
                    <ButtonGroup>
                        <RaisedButton $w={75}><IconNew />New</RaisedButton>
                        <RaisedButton $w={76}><IconCopy />Copy</RaisedButton>
                        <RaisedButton $w={74}><IconTrash />Delete</RaisedButton>
                    </ButtonGroup>
                </LogicNameRow>
                <BodyGrid>
                    <GraphColumn>
                        <GraphToolbar>
                            <ToolItem><IconChart />Solver Nodes</ToolItem>
                            <DropDot />
                            <ToolItem><IconFunction />Function Nodes</ToolItem>
                            <DropDot />
                            <ToolItem><IconLogicNodes />Logic Nodes</ToolItem>
                            <DropDot />
                            <VertBar />
                            <GroupGap>
                                <IconHand />
                                <IconTrash size={10} />
                                <IconFocus />
                                <IconShare />
                            </GroupGap>
                            <CollapseArrow />
                        </GraphToolbar>
                        <NodeEditor />
                    </GraphColumn>
                    <SidePanel>
                        <SelectedBox>
                            <SelectedHead>Selected Node</SelectedHead>
                            <SelectedBody>
                                <NodeCard $selected>
                                    <Swatch $selected><NodeBadge size={16} /></Swatch>
                                    <NodeControls title="And" selected />
                                </NodeCard>
                            </SelectedBody>
                        </SelectedBox>
                        <ListPanel>
                            <NodeList>
                                {LIST_NODES.map((n, i) => (
                                    <NodeCard key={i}>
                                        <Swatch />
                                        <NodeControls title={n} />
                                    </NodeCard>
                                ))}
                            </NodeList>
                        </ListPanel>
                    </SidePanel>
                </BodyGrid>
            </Content>
            <Footer>
                <Toggle><ToggleKnob /></Toggle>
                <ToggleLabel>Auto Update On</ToggleLabel>
            </Footer>
        </Dialog>
    )
}

export default function App() {
    return (
        <Desktop>
            <GlobalStyle />
            <Platform>
                <TopBar>
                    <ChartTag>Chart</ChartTag>
                    <Select>ES 12-21<ChevronIcon /></Select>
                    <Select $dim>15 Minute<ChevronIcon /></Select>
                    <ToolIcons>
                        <IconCandles />
                        <IconPencil />
                        <IconZoom plus />
                        <IconZoom dim />
                        <IconCross />
                        <IconDocSearch />
                        <IconPanels />
                        <IconBarsFrame />
                        <IconLineNodes />
                        <IconClipboard />
                        <IconList />
                    </ToolIcons>
                    <ToolSep />
                    <WorkspaceName>Demo attempt 2</WorkspaceName>
                    <WorkspaceInput>demo attempt 2 entries</WorkspaceInput>
                    <WindowButtons>
                        <GreyButton />
                        <GreyButton />
                        <WinButton>
                            <svg width="10" height="10" viewBox="0 0 10 10"><rect x="1" y="7" width="8" height="2" fill="currentColor" /></svg>
                        </WinButton>
                        <WinButton>
                            <svg width="12" height="12" viewBox="0 0 12 12" fill="none" stroke="currentColor"><rect x="1.5" y="1.5" width="9" height="9" /><path d="M1.5 3H10.5" strokeWidth="2" /></svg>
                        </WinButton>
                        <WinButton>
                            <svg width="11" height="11" viewBox="0 0 11 11" stroke="currentColor" strokeWidth="2.4"><path d="M1 1L10 10M10 1L1 10" /></svg>
                        </WinButton>
                    </WindowButtons>
                </TopBar>
                <ChartFrame>
                    <Chart />
                </ChartFrame>
                <TabStrip>
                    <ChartTab>ES 12-21</ChartTab>
                    <AddTab>+</AddTab>
                </TabStrip>
            </Platform>
            <BottomEdge />
            <BloodHoundWindow />
        </Desktop>
    )
}
